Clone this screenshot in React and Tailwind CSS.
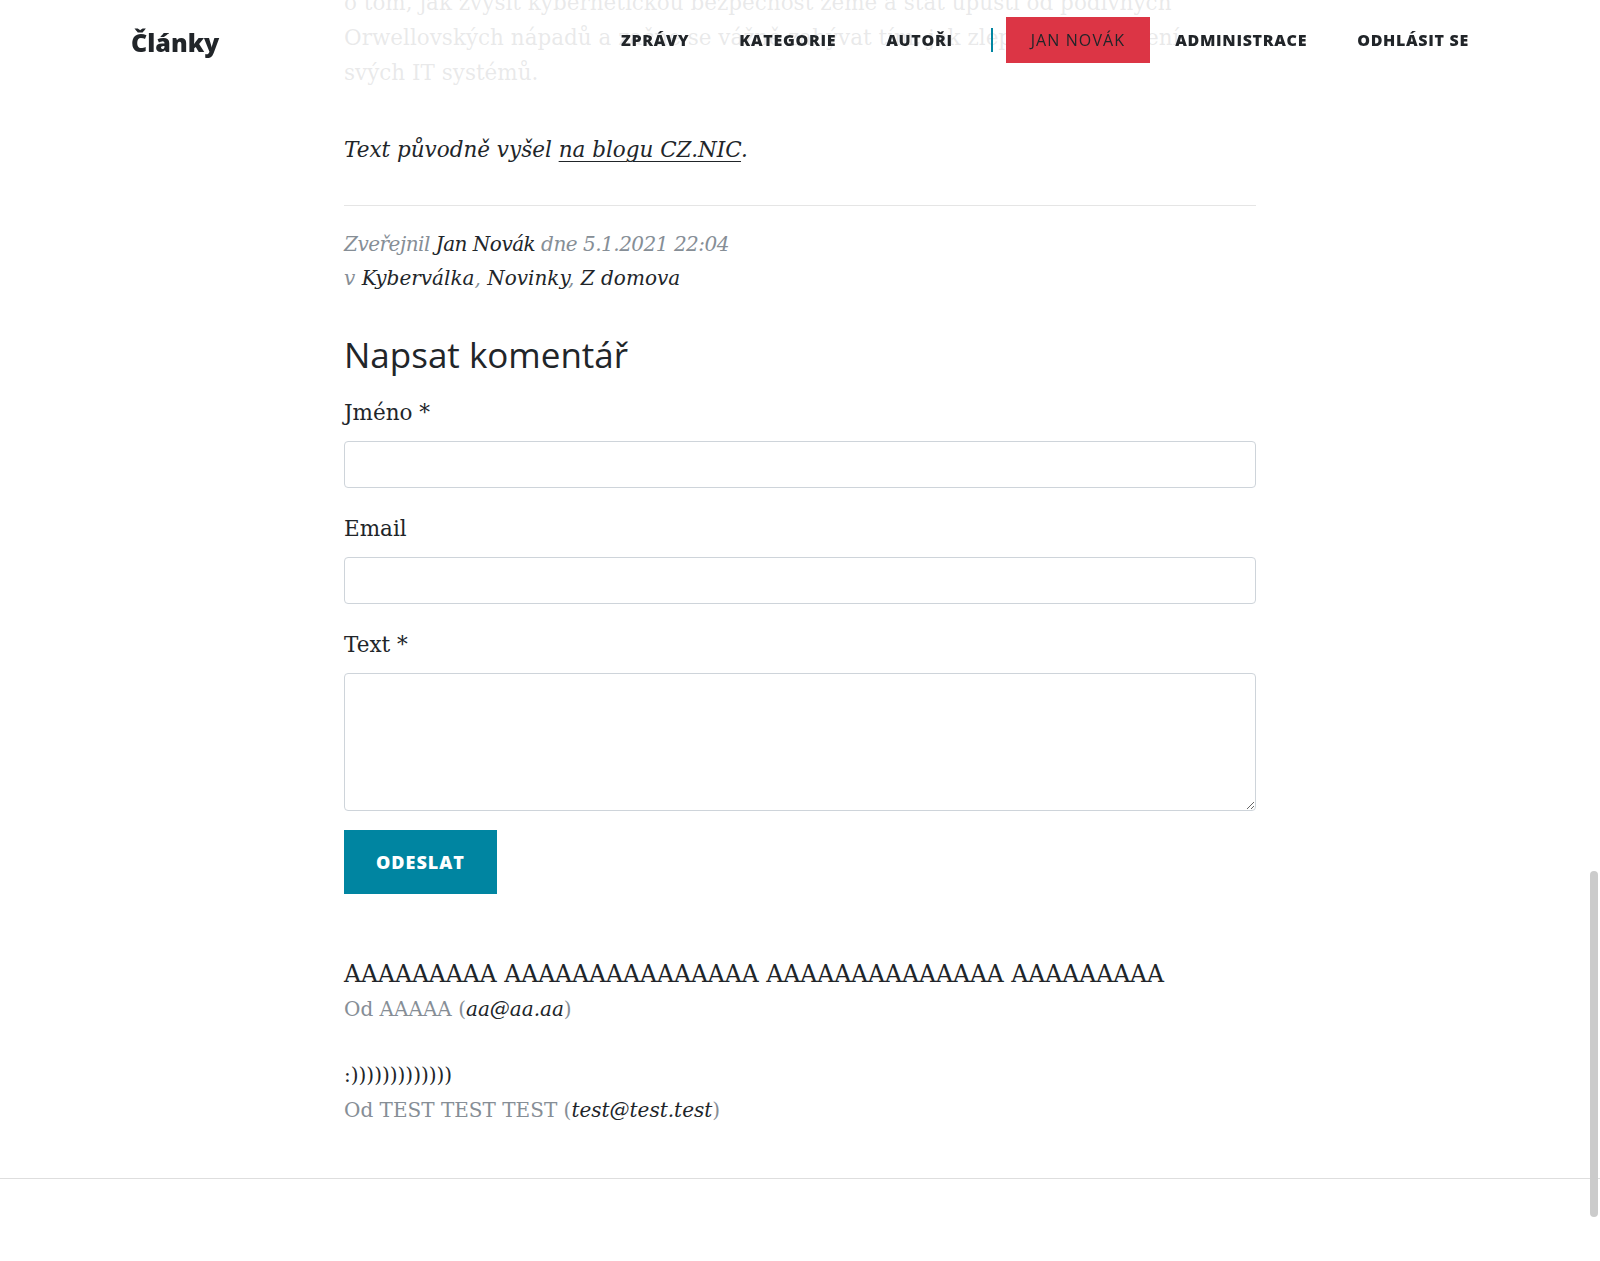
import React from "react";

const navItems = ["Zprávy", "Kategorie", "Autoři"];

function Header() {
  return (
    <header className="fixed top-0 inset-x-0 z-10 h-[85px] bg-white/90 flex items-center justify-between pl-[131px] pr-[106px] font-['Open_Sans',sans-serif]">
      <a href="#" className="text-[25px] font-extrabold text-[#212529] leading-none -mt-[1px]">
        Články
      </a>
      <nav className="flex items-center h-[46px] mt-[-6px]">
        {navItems.map((item) => (
          <a
            key={item}
            href="#"
            className="px-[25px] text-[16px] font-extrabold uppercase tracking-[0.7px] text-[#212529]"
          >
            {item}
          </a>
        ))}
        <span className="mx-[13px] w-[2px] h-[24px] bg-[#0085a1]" />
        <a
          href="#"
          className="h-full flex items-center px-[25px] bg-[#dc3545] text-[16px] uppercase tracking-[1.1px] text-[#212529]"
        >
          Jan Novák
        </a>
        <a href="#" className="px-[25px] text-[16px] font-extrabold uppercase tracking-[0.7px] text-[#212529]">
          Administrace
        </a>
        <a href="#" className="px-[25px] text-[16px] font-extrabold uppercase tracking-[0.7px] text-[#212529]">
          Odhlásit se
        </a>
      </nav>
    </header>
  );
}

function Field({ label, children }) {
  return (
    <div className="mt-[23px] first:mt-0">
      <label className="block leading-[35px]">{label}</label>
      <div className="mt-[11px]">{children}</div>
    </div>
  );
}

function Comment({ text, name, email, big }) {
  return (
    <div className="leading-[35px]">
      <p className={big ? "text-[23.5px]" : "text-[20px]"}>{text}</p>
      <p className="text-[20px]">
        <span className="text-[#868e96]">Od {name} (</span>
        <span className="italic">{email}</span>
        <span className="text-[#868e96]">)</span>
      </p>
    </div>
  );
}

export default function App() {
  return (
    <div className="min-h-screen bg-white text-[#212529] font-['DejaVu_Serif',serif] text-[21.5px]">
      <Header />

      <main className="max-w-[912px] mx-auto">
        <div className="-mt-[15px] leading-[35px] whitespace-nowrap">
          <p>o tom, jak zvýšit kybernetickou bezpečnost země a stát upustí od podivných</p>
          <p>Orwellovských nápadů a začne se vážně zabývat tím, jak zlepšit zabezpečení</p>
          <p>svých IT systémů.</p>
        </div>

        <p className="mt-[42px] italic leading-[35px]">
          Text původně vyšel{" "}
          <a href="#" className="underline underline-offset-[4px] decoration-1">
            na blogu CZ.NIC
          </a>
          .
        </p>

        <hr className="mt-[38px] border-t border-[#e5e5e5]" />

        <div className="mt-[21px] italic text-[20px] leading-[34px]">
          <p className="tracking-[-0.5px]">
            <span className="text-[#868e96]">Zveřejnil </span>
            <a href="#">Jan Novák</a>
            <span className="text-[#868e96]"> dne 5.1.2021 22:04</span>
          </p>
          <p>
            <span className="text-[#868e96]">v </span>
            <a href="#">Kyberválka</a>
            <span className="text-[#868e96]">, </span>
            <a href="#">Novinky</a>
            <span className="text-[#868e96]">, </span>
            <a href="#">Z domova</a>
          </p>
        </div>

        <h2 className="mt-[38px] font-['Open_Sans',sans-serif] text-[35px] leading-[43px] font-normal">
          Napsat komentář
        </h2>

        <form className="mt-[19px]" onSubmit={(e) => e.preventDefault()}>
          <Field label="Jméno *">
            <input className="block w-full h-[47px] border border-[#ced4da] rounded-[4px] px-3 outline-none" />
          </Field>
          <Field label="Email">
            <input className="block w-full h-[47px] border border-[#ced4da] rounded-[4px] px-3 outline-none" />
          </Field>
          <Field label="Text *">
            <textarea className="block w-full h-[138px] border border-[#ced4da] rounded-[4px] px-3 py-2 outline-none" />
          </Field>
          <button
            type="submit"
            className="mt-[19px] h-[64px] w-[153px] bg-[#0085a1] text-white font-['Open_Sans',sans-serif] text-[18px] font-extrabold uppercase tracking-[1px]"
          >
            Odeslat
          </button>
        </form>

        <div className="mt-[63px] flex flex-col gap-[31px]">
          <Comment
            big
            text="AAAAAAAAA AAAAAAAAAAAAAAA AAAAAAAAAAAAAA AAAAAAAAA"
            name="AAAAA"
            email="aa@aa.aa"
          />
          <Comment text=":)))))))))))))" name="TEST TEST TEST" email="test@test.test" />
        </div>
      </main>

      <footer className="mt-[50px] h-[100px] border-t border-[#dedede]" />

      <div className="fixed right-[2px] top-[871px] w-[8px] h-[346px] rounded-full bg-[#cbcbcb]" />
    </div>
  );
}
